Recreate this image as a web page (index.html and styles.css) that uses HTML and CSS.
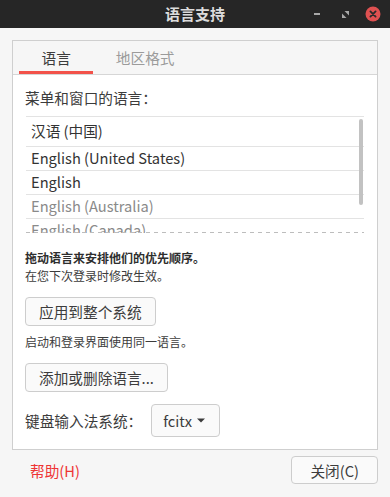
FILE: index.html
```html
<!DOCTYPE html>
<html lang="zh-CN">
<head>
<meta charset="utf-8">
<title>语言支持</title>
<link rel="stylesheet" href="styles.css">
</head>
<body>
<div class="titlebar">
  <div class="title">语言支持</div>
  <div class="controls">
    <div class="ctl"><svg width="8" height="2" viewBox="0 0 8 2"><rect x="1" y="0" width="6" height="2" fill="#a8a8a8"/></svg></div>
    <div class="ctl"><svg width="7" height="7" viewBox="0 0 7 7"><polygon points="2.5,0 7,0 7,4.5" fill="#a8a8a8"/><polygon points="0,2.5 0,7 4.5,7" fill="#a8a8a8"/></svg></div>
    <div class="ctl"><svg width="16" height="16" viewBox="0 0 16 16"><circle cx="8" cy="8" r="7.5" fill="#df5151"/><path d="M5.4 5.4 L10.6 10.6 M10.6 5.4 L5.4 10.6" stroke="#2a2a2a" stroke-width="1.8" stroke-linecap="round"/></svg></div>
  </div>
</div>
<div class="dialog">
  <div class="notebook">
    <div class="tabs">
      <div class="tab active">语言</div>
      <div class="tab">地区格式</div>
    </div>
    <div class="page">
      <div class="label">菜单和窗口的语言：</div>
      <div class="listwrap">
        <ul class="list">
          <li class="row first">汉语 (中国)</li>
          <li class="row">English (United States)</li>
          <li class="row">English</li>
          <li class="row dim">English (Australia)</li>
          <li class="row dim">English (Canada)</li>
        </ul>
        <div class="scrollbar"></div>
        <div class="undershoot"></div>
      </div>
      <div class="hint bold">拖动语言来安排他们的优先顺序。</div>
      <div class="hint">在您下次登录时修改生效。</div>
      <button class="btn">应用到整个系统</button>
      <div class="hint after">启动和登录界面使用同一语言。</div>
      <button class="btn">添加或删除语言...</button>
      <div class="im-row">
        <span class="im-label">键盘输入法系统：</span>
        <button class="btn combo"><span>fcitx</span><svg width="8" height="5" viewBox="0 0 8 5"><polygon points="0,0.5 8,0.5 4,4.5" fill="#3c3c3c"/></svg></button>
      </div>
    </div>
  </div>
  <div class="actions">
    <span class="help">帮助(H)</span>
    <button class="btn close">关闭(C)</button>
  </div>
</div>
</body>
</html>
```
FILE: styles.css
```css
* { box-sizing: border-box; }
html, body { margin: 0; padding: 0; }
body {
  width: 390px;
  height: 497px;
  overflow: hidden;
  background: #f6f6f6;
  font-family: "Noto Sans CJK SC", "Noto Sans", sans-serif;
  font-size: 14.67px;
  color: #3c3c3c;
}
.titlebar {
  height: 28px;
  background: #262626;
  display: grid;
  grid-template-columns: 1fr auto 1fr;
  align-items: center;
}
.title {
  grid-column: 2;
  color: #dcdcdc;
  font-weight: bold;
  font-size: 15px;
  line-height: 28px;
}
.controls {
  grid-column: 3;
  justify-self: end;
  display: flex;
  padding-right: 3px;
  height: 28px;
}
.ctl {
  width: 28px;
  height: 28px;
  display: flex;
  align-items: center;
  justify-content: center;
}
.dialog { padding: 12px 12px 0; }
.notebook {
  border: 1px solid #cfcfcf;
  background: #ffffff;
}
.tabs {
  display: flex;
  height: 34px;
  padding-left: 6px;
  background: #f6f6f6;
  border-bottom: 1px solid #d6d6d6;
}
.tab {
  padding: 1px 22.5px 0;
  line-height: 32px;
  color: #9b9b9b;
}
.tab.active {
  color: #3c3c3c;
  box-shadow: inset 0 -3px #f2524a;
}
.page { padding: 13px 13px 12px 12px; }
.label { line-height: 20px; }
.listwrap {
  position: relative;
  margin: 8px 0 0 1px;
  height: 117px;
  overflow: hidden;
  border-top: 1px solid #e3e3e3;
}
.list { list-style: none; margin: 0; padding: 0; }
.row {
  height: 24px;
  border-bottom: 1px solid #e3e3e3;
  padding-left: 5px;
  line-height: 21px;
  color: #333333;
  white-space: nowrap;
}
.row.first { height: 30px; line-height: 28px; }
.row.dim { color: #8a8a8a; }
.scrollbar {
  position: absolute;
  right: 1px;
  top: 2px;
  width: 4px;
  height: 86px;
  background: #c2c2c2;
  border-radius: 2px;
}
.undershoot {
  position: absolute;
  left: 0;
  right: 0;
  bottom: 0;
  height: 1px;
  background: repeating-linear-gradient(90deg, #bdbdbd 0 4px, transparent 4px 8px);
}
.hint { font-size: 12px; line-height: 18px; }
.hint.bold { font-weight: bold; margin-top: 16px; color: #2e2e2e; }
.hint.after { margin-top: 7px; }
.btn {
  display: block;
  font: inherit;
  height: 29px;
  padding: 0 13px;
  margin-top: 12px;
  border: 1px solid #cdcdcd;
  border-radius: 4px;
  background: #fafafa;
  color: #3c3c3c;
}
.im-row {
  display: flex;
  align-items: center;
  margin-top: 12px;
}
.btn.combo {
  height: 33px;
  margin: 0 0 0 9px;
  display: flex;
  align-items: center;
  gap: 5px;
  padding: 0 14px 0 11px;
}
.actions {
  display: flex;
  justify-content: space-between;
  align-items: center;
  margin-top: 6px;
}
.help {
  padding-left: 18px;
  color: #ee3434;
}
.btn.close {
  height: 28px;
  margin: 0;
  padding: 0 18px;
}
```
